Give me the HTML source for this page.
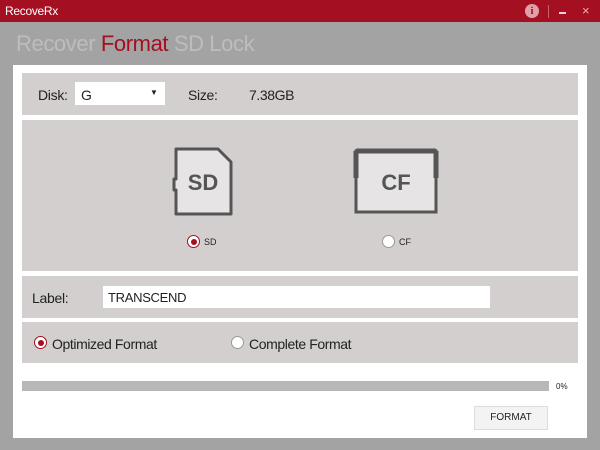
<!DOCTYPE html>
<html><head><meta charset="utf-8"><style>
*{margin:0;padding:0;box-sizing:border-box}
body{width:600px;height:450px;background:#a3a3a3;font-family:"Liberation Sans",sans-serif;position:relative;overflow:hidden;color:#222}
.a{position:absolute}
.sec{position:absolute;left:22px;width:556px;background:#d3cfcf}
.radio{position:absolute;width:13px;height:13px;border-radius:50%;background:#fff;border:1px solid #999}
.radio.on::after{content:"";position:absolute;left:2.5px;top:2.5px;width:6px;height:6px;border-radius:50%;background:#a50f1e}
.radio.on{border-color:#a50f1e}
</style></head><body>
<div class="a" style="left:0;top:0;width:600px;height:22px;background:#a50f22"></div>
<div class="a" style="left:5px;top:4px;font-size:12px;color:#fff;letter-spacing:-0.3px">RecoveRx</div>
<div class="a" style="left:525px;top:4px;width:14px;height:14px;border-radius:50%;background:#e0a0a8;color:#a50f22;font:bold 11px 'Liberation Serif',serif;text-align:center;line-height:14px">i</div>
<div class="a" style="left:548px;top:5px;width:1px;height:13px;background:#c86070"></div>
<div class="a" style="left:559px;top:12px;width:7px;height:2px;background:#f0d0d4"></div>
<div class="a" style="left:582px;top:3px;font-size:13px;color:#e8b0b8">×</div>
<div class="a" style="left:16px;top:31px;font-size:22px;color:#bdbdbd;letter-spacing:-0.4px">Recover <span style="color:#a50f22">Format</span> SD Lock</div>
<div class="a" style="left:13px;top:65px;width:574px;height:373px;background:#fff"></div>
<div class="sec" style="top:73px;height:42px"></div>
<div class="a" style="left:38px;top:87px;font-size:14px;letter-spacing:-0.3px">Disk:</div>
<div class="a" style="left:75px;top:82px;width:90px;height:23px;background:#fff"></div>
<div class="a" style="left:81px;top:87px;font-size:14px">G</div>
<div class="a" style="left:150px;top:88px;font-size:8px">▼</div>
<div class="a" style="left:188px;top:87px;font-size:14px;letter-spacing:-0.3px">Size:</div>
<div class="a" style="left:249px;top:87px;font-size:14px;letter-spacing:-0.4px">7.38GB</div>
<div class="sec" style="top:120px;height:151px"></div>
<svg class="a" style="left:172px;top:146px" width="64" height="72">
<path d="M4 3 H46 L59 16 V68 H4 V44 H2 V33 H4 Z" fill="#e6e4e4" stroke="#555" stroke-width="3" stroke-linejoin="round"/>
<text x="31" y="44" text-anchor="middle" font-family="Liberation Sans" font-weight="bold" font-size="22" fill="#555">SD</text></svg>
<svg class="a" style="left:353px;top:148px" width="86" height="68">
<path d="M3 3 H83 V64 H3 Z" fill="#e6e4e4" stroke="#555" stroke-width="3"/>
<path d="M3 3 V30 M83 3 V30 M3 3 H83" stroke="#555" stroke-width="5" fill="none"/>
<text x="43" y="42" text-anchor="middle" font-family="Liberation Sans" font-weight="bold" font-size="22" fill="#555">CF</text></svg>
<div class="radio on" style="left:187px;top:235px"></div>
<div class="a" style="left:204px;top:237px;font-size:9px">SD</div>
<div class="radio" style="left:382px;top:235px"></div>
<div class="a" style="left:399px;top:237px;font-size:9px">CF</div>
<div class="sec" style="top:276px;height:42px"></div>
<div class="a" style="left:32px;top:290px;font-size:14px;letter-spacing:-0.3px">Label:</div>
<div class="a" style="left:103px;top:286px;width:387px;height:22px;background:#fff"></div>
<div class="a" style="left:108px;top:290px;font-size:13px;letter-spacing:-0.3px">TRANSCEND</div>
<div class="sec" style="top:322px;height:41px"></div>
<div class="radio on" style="left:34px;top:336px"></div>
<div class="a" style="left:52px;top:336px;font-size:14px;letter-spacing:-0.4px">Optimized Format</div>
<div class="radio" style="left:231px;top:336px"></div>
<div class="a" style="left:249px;top:336px;font-size:14px;letter-spacing:-0.4px">Complete Format</div>
<div class="a" style="left:22px;top:381px;width:527px;height:10px;background:#b8b8b8"></div>
<div class="a" style="left:556px;top:382px;font-size:8px">0%</div>
<div class="a" style="left:474px;top:406px;width:74px;height:24px;background:#f3f3f3;border:1px solid #ddd;font-size:10px;text-align:center;line-height:22px">FORMAT</div>
</body></html>
